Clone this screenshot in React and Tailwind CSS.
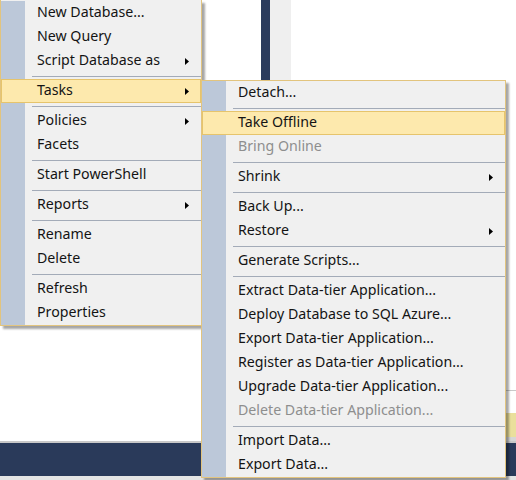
import React from "react";

const font = { fontFamily: '"Noto Sans", "Open Sans", sans-serif' };

const mainItems = [
  { label: "New Database..." },
  { label: "New Query" },
  { label: "Script Database as", sub: true },
  { sep: true },
  { label: "Tasks", sub: true, active: true },
  { sep: true },
  { label: "Policies", sub: true },
  { label: "Facets" },
  { sep: true },
  { label: "Start PowerShell" },
  { sep: true },
  { label: "Reports", sub: true },
  { sep: true },
  { label: "Rename" },
  { label: "Delete" },
  { sep: true },
  { label: "Refresh" },
  { label: "Properties" },
];

const taskItems = [
  { label: "Detach..." },
  { sep: true },
  { label: "Take Offline", active: true },
  { label: "Bring Online", disabled: true },
  { sep: true },
  { label: "Shrink", sub: true },
  { sep: true },
  { label: "Back Up..." },
  { label: "Restore", sub: true },
  { sep: true },
  { label: "Generate Scripts..." },
  { sep: true },
  { label: "Extract Data-tier Application..." },
  { label: "Deploy Database to SQL Azure..." },
  { label: "Export Data-tier Application..." },
  { label: "Register as Data-tier Application..." },
  { label: "Upgrade Data-tier Application..." },
  { label: "Delete Data-tier Application...", disabled: true },
  { sep: true },
  { label: "Import Data..." },
  { label: "Export Data..." },
];

function Arrow() {
  return (
    <svg width="4" height="7" viewBox="0 0 4 7" className="shrink-0">
      <path d="M0 0 L4 3.5 L0 7 Z" fill="#000" />
    </svg>
  );
}

function MenuList({ items }) {
  return (
    <div className="flex flex-col">
      {items.map((it, i) =>
        it.sep ? (
          <div key={i} className="h-[6px] flex items-center pl-[31px]">
            <div className="h-px w-full bg-[#a3abb8]" />
          </div>
        ) : (
          <div
            key={i}
            className={
              "h-6 flex items-center pl-[35px] pr-[11px] border " +
              (it.active ? "bg-[#fde9ad] border-[#e6c46c]" : "border-transparent")
            }
          >
            <span
              className={"flex-1 text-[14.2px] leading-none pb-px " + (it.disabled ? "text-[#8e8e8e]" : "text-[#141414]")}
              style={font}
            >
              {it.label}
            </span>
            {it.sub && <Arrow />}
          </div>
        )
      )}
    </div>
  );
}

function Menu({ items, className }) {
  return (
    <div className={"absolute flex bg-[#f0f0f0] border-[#e2c47e] shadow-[3px_3px_2px_rgba(0,0,0,0.35)] " + className}>
      <div className="w-[24px] shrink-0 bg-[#bcc8d9]" />
      <div className="flex-1 -ml-[24px]">
        <MenuList items={items} />
      </div>
    </div>
  );
}

export default function App() {
  return (
    <div className="relative w-[516px] h-[480px] overflow-hidden bg-white flex flex-col">
      {/* window behind the menus */}
      <div className="h-[441px] flex">
        <div className="w-[261px]" />
        <div className="w-[9px] h-[90px] bg-[#2b3b5d]" />
        <div className="w-[21px] h-[90px] bg-[#efefef]" />
        <div className="flex-1" />
        <div className="w-[10px] flex flex-col">
          <div className="h-[390px]" />
          <div className="h-px bg-[#c9c9c9]" />
          <div className="h-[22px]" />
          <div className="h-[24px] bg-[#eadf9c]" />
          <div className="flex-1 bg-[#d6d6d6]" />
        </div>
      </div>
      <div className="h-[2px] bg-[#c8c8c8]" />
      <div className="h-[33px] bg-[#2a3a5a]" />
      <div className="flex-1 bg-[#e4e4e4]" />

      {/* context menu */}
      <Menu items={mainItems} className="left-0 top-0 w-[202px] h-[326px] pt-px border-l border-b border-r" />

      {/* Tasks submenu */}
      <Menu items={taskItems} className="left-[201px] top-[80px] w-[305px] h-[398px] border" />
    </div>
  );
}
